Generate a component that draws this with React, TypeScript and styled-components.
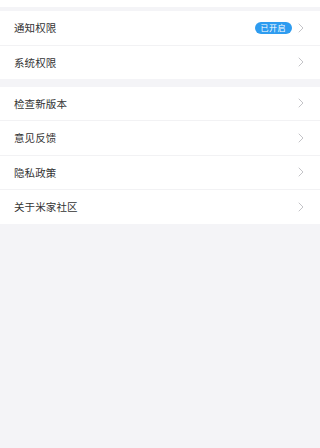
import styled, { createGlobalStyle } from 'styled-components';

const GlobalStyle = createGlobalStyle`
  html, body {
    margin: 0;
    padding: 0;
    background: #f4f4f7;
  }
  body {
    font-family: "Noto Sans CJK SC", "Noto Sans", sans-serif;
  }
`;

type Item = { label: string; badge?: string };

const groups: Item[][] = [
  [{ label: '通知权限', badge: '已开启' }, { label: '系统权限' }],
  [
    { label: '检查新版本' },
    { label: '意见反馈' },
    { label: '隐私政策' },
    { label: '关于米家社区' },
  ],
];

function Chevron() {
  return (
    <svg width="6" height="10" viewBox="0 0 6 10" fill="none">
      <path d="M1 1l4 4-4 4" stroke="#c4c4c8" strokeWidth="1" strokeLinecap="round" strokeLinejoin="round" />
    </svg>
  );
}

export default function App() {
  return (
    <Page>
      <GlobalStyle />
      <TopStub />
      {groups.map((group, gi) => (
        <Group key={gi} $first={gi === 0}>
          {group.map((item) => (
            <Row key={item.label}>
              <Label>{item.label}</Label>
              <Right>
                {item.badge && <Badge>{item.badge}</Badge>}
                <Chevron />
              </Right>
            </Row>
          ))}
        </Group>
      ))}
    </Page>
  );
}

const Page = styled.div`
  width: 100%;
  min-height: 448px;
  display: flex;
  flex-direction: column;
  background: #f4f4f7;
`;

const TopStub = styled.div`
  height: 7px;
  background: #ffffff;
`;

const Group = styled.div<{ $first?: boolean }>`
  display: flex;
  flex-direction: column;
  background: #ffffff;
  margin-top: ${(p) => (p.$first ? '4px' : '7.5px')};
`;

const Row = styled.div`
  height: 33.5px;
  display: flex;
  align-items: center;
  justify-content: space-between;
  padding: 0 16px 0 14px;
  & + & {
    border-top: 1px solid #f2f2f4;
  }
`;

const Label = styled.span`
  font-size: 10.5px;
  color: #333333;
  letter-spacing: 0.1px;
`;

const Right = styled.div`
  display: flex;
  align-items: center;
  gap: 6px;
`;

const Badge = styled.span`
  height: 12px;
  padding: 0 6px;
  border-radius: 6px;
  background: #2e9cf0;
  color: #ffffff;
  font-size: 8px;
  line-height: 12px;
  letter-spacing: 0.5px;
`;
